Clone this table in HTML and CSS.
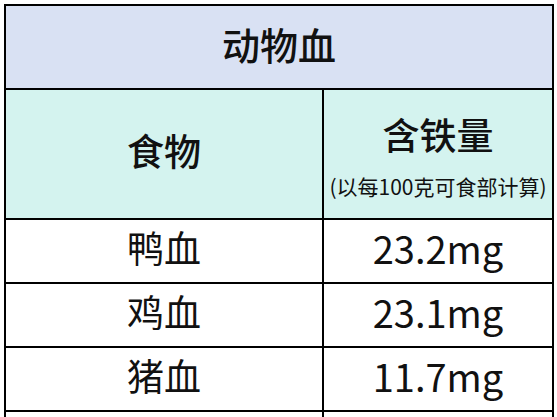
FILE: index.html
```html
<!DOCTYPE html>
<html lang="zh-CN">
<head>
<meta charset="utf-8">
<link rel="stylesheet" href="styles.css">
</head>
<body>
<div class="table">
  <div class="cell title">动物血</div>
  <div class="cell sub food-h">食物</div>
  <div class="cell sub iron-h">
    <div class="iron-main">含铁量</div>
    <div class="iron-note">(以每100克可食部计算)</div>
  </div>
  <div class="cell row">鸭血</div>
  <div class="cell row num">23.2mg</div>
  <div class="cell row">鸡血</div>
  <div class="cell row num">23.1mg</div>
  <div class="cell row">猪血</div>
  <div class="cell row num">11.7mg</div>
  <div class="cell row"></div>
  <div class="cell row num"></div>
</div>
</body>
</html>
```
FILE: styles.css
```css
html, body {
  margin: 0;
  padding: 0;
  background: #ffffff;
}
body {
  font-family: "Noto Sans CJK SC", "Noto Sans", sans-serif;
  color: #111111;
}
.table {
  margin: 4px 0 0 4px;
  display: grid;
  grid-template-columns: 318px 230px;
  width: 548px;
  border-left: 2px solid #000;
  border-top: 2px solid #000;
}
.cell {
  box-sizing: border-box;
  border-right: 2px solid #000;
  border-bottom: 2px solid #000;
  display: flex;
  align-items: center;
  justify-content: center;
  text-align: center;
}
.title {
  grid-column: 1 / 3;
  height: 84px;
  padding-bottom: 8px;
  background: #d9e1f3;
  font-size: 38px;
  font-weight: 500;
}
.sub {
  height: 130px;
  background: #d4f3ef;
}
.food-h {
  font-size: 37px;
  font-weight: 500;
  padding-bottom: 8px;
}
.iron-h {
  flex-direction: column;
  padding-top: 4px;
}
.iron-main {
  font-size: 37px;
  font-weight: 500;
  line-height: 44px;
}
.iron-note {
  font-size: 21px;
  font-weight: 400;
  line-height: 28px;
  margin-top: 16px;
  white-space: nowrap;
}
.row {
  height: 64px;
  padding-bottom: 8px;
  font-size: 37px;
  font-weight: 400;
}
.num {
  font-size: 38px;
}
```
